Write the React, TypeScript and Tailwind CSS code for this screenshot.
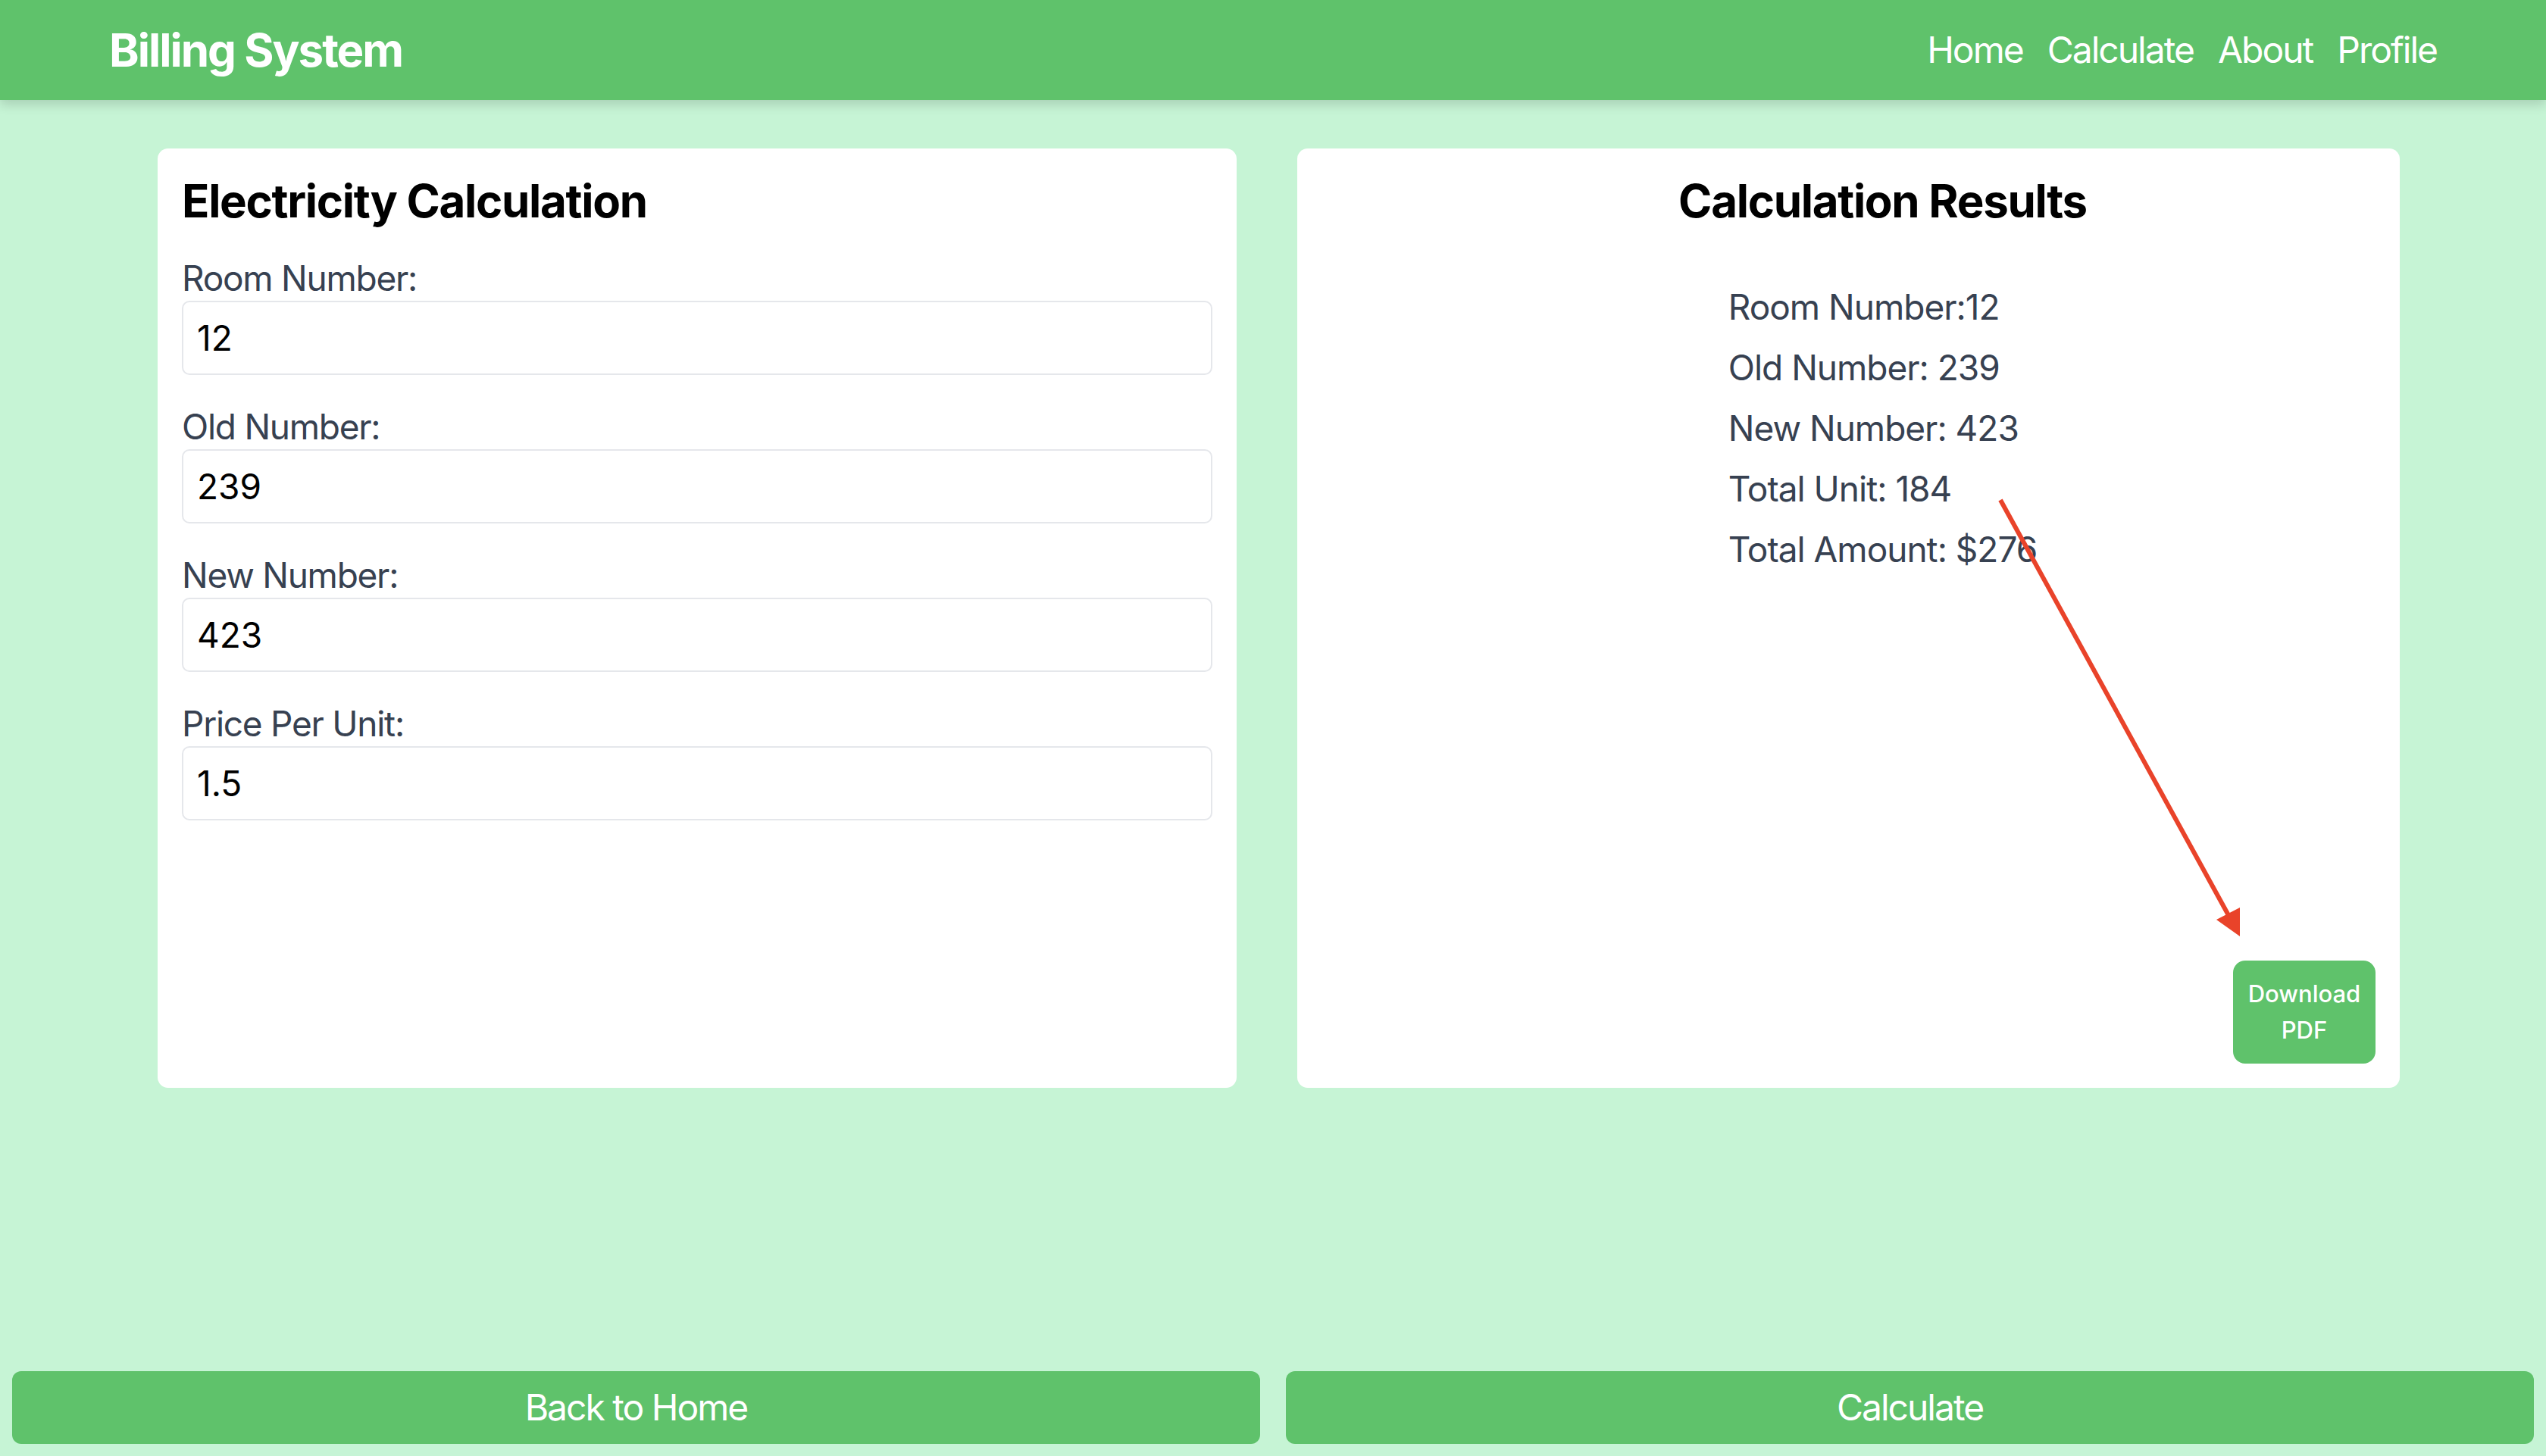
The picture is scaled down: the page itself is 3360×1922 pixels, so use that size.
import React from "react";

const fields = [
    { label: "Room Number:", value: "12" },
    { label: "Old Number:", value: "239" },
    { label: "New Number:", value: "423" },
    { label: "Price Per Unit:", value: "1.5" },
];

const results = [
    "Room Number:12",
    "Old Number: 239",
    "New Number: 423",
    "Total Unit: 184",
    "Total Amount: $276",
];

function App() {
    return (
        <div className="relative min-h-screen flex flex-col bg-[#c6f4d5] font-['Inter',sans-serif]">
            {/* Header */}
            <header className="h-[132px] shrink-0 flex items-center justify-between px-36 bg-[#5fc26b] text-white shadow-[0_6px_14px_rgba(0,0,0,0.15)] z-10">
                <h1 className="text-[60px] font-bold leading-none tracking-[-2px]">
                    Billing System
                </h1>
                <nav className="flex items-center gap-8 text-[48px] leading-none tracking-[-2px]">
                    <a href="#">Home</a>
                    <a href="#">Calculate</a>
                    <a href="#">About</a>
                    <a href="#">Profile</a>
                </nav>
            </header>

            {/* Cards */}
            <main className="flex-1 flex items-start gap-[80px] pl-[208px] pt-[64px]">
                <section className="w-[1424px] h-[1240px] bg-white rounded-[14px] px-8 pt-[33px]">
                    <h2 className="text-[60px] font-bold leading-[72px] tracking-[-1.3px] text-black mb-[38px]">
                        Electricity Calculation
                    </h2>
                    {fields.map((f) => (
                        <div key={f.label} className="mb-[40px]">
                            <label className="block text-[46px] leading-[56px] tracking-[-1.25px] text-[#374151] mb-[2px]">
                                {f.label}
                            </label>
                            <input
                                readOnly
                                value={f.value}
                                className="w-full h-[98px] px-[18px] text-[46px] text-black border-2 border-[#e5e7eb] rounded-[10px] outline-none"
                            />
                        </div>
                    ))}
                </section>

                <section className="w-[1455px] h-[1240px] bg-white rounded-[14px] p-8 pt-[33px] flex flex-col">
                    <div className="flex flex-col items-center pl-[90px]">
                        <h2 className="text-[60px] font-bold leading-[72px] tracking-[-1.3px] text-black mb-[64px]">
                            Calculation Results
                        </h2>
                        <ul className="text-[46px] leading-[80px] tracking-[-1px] text-[#374151]">
                            {results.map((r) => (
                                <li key={r}>{r}</li>
                            ))}
                        </ul>
                    </div>
                    <button className="mt-auto self-end w-[188px] h-[136px] rounded-[16px] bg-[#5fc26b] text-white text-[31px] leading-[48px] font-medium">
                        Download
                        <br />
                        PDF
                    </button>
                </section>
            </main>

            {/* Bottom actions */}
            <footer className="shrink-0 flex gap-[34px] px-4 pb-4">
                <button className="flex-1 h-[96px] rounded-[12px] bg-[#5fc26b] text-white text-[48px] tracking-[-2px]">
                    Back to Home
                </button>
                <button className="flex-1 h-[96px] rounded-[12px] bg-[#5fc26b] text-white text-[48px] tracking-[-2px]">
                    Calculate
                </button>
            </footer>

            {/* Annotation arrow */}
            <svg
                className="absolute inset-0 pointer-events-none z-20"
                width="3360"
                height="1922"
            >
                <line
                    x1="2640"
                    y1="660"
                    x2="2942"
                    y2="1210"
                    stroke="#e9432a"
                    strokeWidth="6"
                />
                <polygon points="2925,1214 2956,1198 2956,1236" fill="#e9432a" />
            </svg>
        </div>
    );
}

export default App;
